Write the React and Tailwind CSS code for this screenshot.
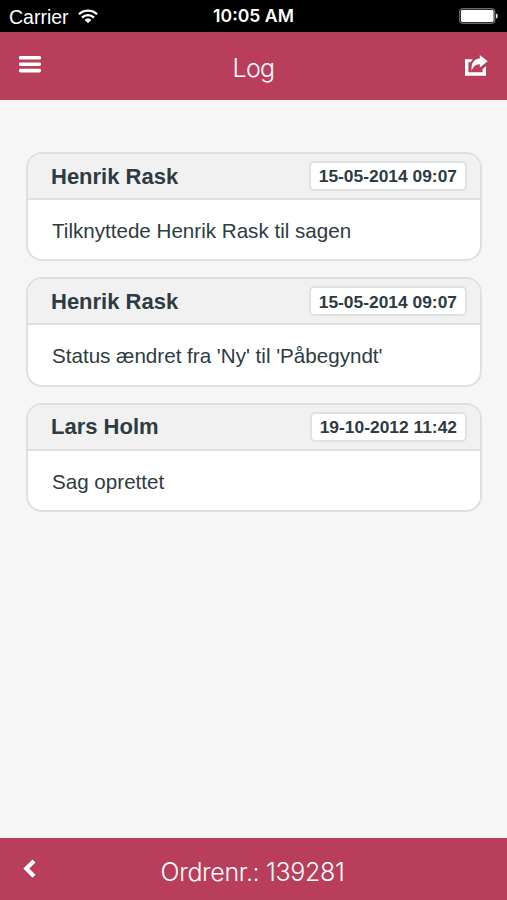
const entries = [
  { name: 'Henrik Rask', date: '15-05-2014 09:07', text: 'Tilknyttede Henrik Rask til sagen' },
  { name: 'Henrik Rask', date: '15-05-2014 09:07', text: "Status ændret fra 'Ny' til 'Påbegyndt'" },
  { name: 'Lars Holm', date: '19-10-2012 11:42', text: 'Sag oprettet' },
];

function WifiIcon() {
  return (
    <svg width="20" height="15" viewBox="0 0 20 15" fill="none" stroke="#fff" strokeWidth="2.3">
      <path d="M.9 5.3a12.9 12.9 0 0 1 18.2 0" />
      <path d="M4 8.6a8.5 8.5 0 0 1 12 0" />
      <path d="M10 14.2 6.6 10.9a4.8 4.8 0 0 1 6.8 0z" fill="#fff" stroke="none" />
    </svg>
  );
}

function BatteryIcon() {
  return (
    <svg width="39" height="16" viewBox="0 0 39 16">
      <rect x=".8" y=".8" width="35" height="14.4" rx="2.4" fill="none" stroke="#999" strokeWidth="1" />
      <rect x="2" y="2" width="32.6" height="12" rx="1.4" fill="#fff" />
      <path d="M37 5.4c2.4.8 2.4 4.4 0 5.2z" fill="#fff" />
    </svg>
  );
}

function MenuIcon() {
  return (
    <svg width="22" height="17" viewBox="0 0 22 17" fill="#fff">
      <rect width="22" height="3.6" rx="1.4" />
      <rect y="6.4" width="22" height="3.6" rx="1.4" />
      <rect y="12.8" width="22" height="3.6" rx="1.4" />
    </svg>
  );
}

function ShareIcon() {
  return (
    <svg width="23" height="21" viewBox="0 0 23 21" fill="#fff">
      <path d="M0 4.3h7.8L5.4 7.3H3.4v10h14.2v-3l3.4-3.2v9.6H0z" />
      <path d="M14.8 0l7.9 6.2-7.9 6.3V9.3c-4 0-6.4 2-8.1 6.4C5.8 8.2 9 4 14.8 3.6z" />
    </svg>
  );
}

function BackIcon() {
  return (
    <svg width="13" height="20" viewBox="0 0 13 20" fill="none" stroke="#fff" strokeWidth="4.2">
      <path d="M11 2 3.3 9.6l7.7 7.7" />
    </svg>
  );
}

function LogEntry({ name, date, text }) {
  return (
    <div className="h-[109.3px] rounded-[16px] border-2 border-[#dedfdf] bg-white overflow-hidden">
      <div className="flex h-[46px] items-center justify-between border-b-2 border-[#dedfdf] bg-[#f1f1f1] pl-[23.5px] pr-[12.5px]">
        <span className="text-[22px] font-bold">{name}</span>
        <span className="flex h-[30px] items-center rounded-[5px] border-2 border-[#e0e1e1] bg-white px-2 pt-px text-[17.4px] font-bold">
          {date}
        </span>
      </div>
      <p className="pl-[24.5px] pt-[17px] text-[20.6px] leading-[28px]">{text}</p>
    </div>
  );
}

export default function App() {
  return (
    <div className="flex h-[900px] w-[507px] flex-col overflow-hidden bg-[#f6f6f6] font-['Liberation_Sans',sans-serif] text-[#2d3b42]">
      <div className="grid h-8 shrink-0 grid-cols-3 items-center bg-black pl-[9px] pr-[9px] text-white">
        <div className="flex items-center gap-[9px] pt-px">
          <span className="text-[19.5px] leading-6">Carrier</span>
          <WifiIcon />
        </div>
        <span className="pt-px text-center font-['Inter',sans-serif] text-[17.6px] font-semibold">10:05 AM</span>
        <div className="flex justify-end">
          <BatteryIcon />
        </div>
      </div>

      <header className="grid h-[67.5px] shrink-0 grid-cols-3 items-center bg-[#b93e5b] pl-[19px] pr-[19px] text-white">
        <div className="pb-[3px]">
          <MenuIcon />
        </div>
        <h1 className="pt-[5px] text-center font-['Inter',sans-serif] text-[25px] font-light tracking-[-0.6px]">Log</h1>
        <div className="flex justify-end pb-px">
          <ShareIcon />
        </div>
      </header>

      <main className="flex flex-1 flex-col gap-4 px-[25.5px] pt-[52.5px]">
        {entries.map((entry, i) => (
          <LogEntry key={i} {...entry} />
        ))}
      </main>

      <footer className="grid h-[62px] shrink-0 grid-cols-[60px_1fr_60px] items-center bg-[#b93e5b] text-white">
        <div className="pl-[23px]">
          <BackIcon />
        </div>
        <span className="pr-0.5 pt-2 text-center font-['Inter',sans-serif] text-[25px] font-light tracking-[-0.35px]">
          Ordrenr.: 139281
        </span>
      </footer>
    </div>
  );
}
